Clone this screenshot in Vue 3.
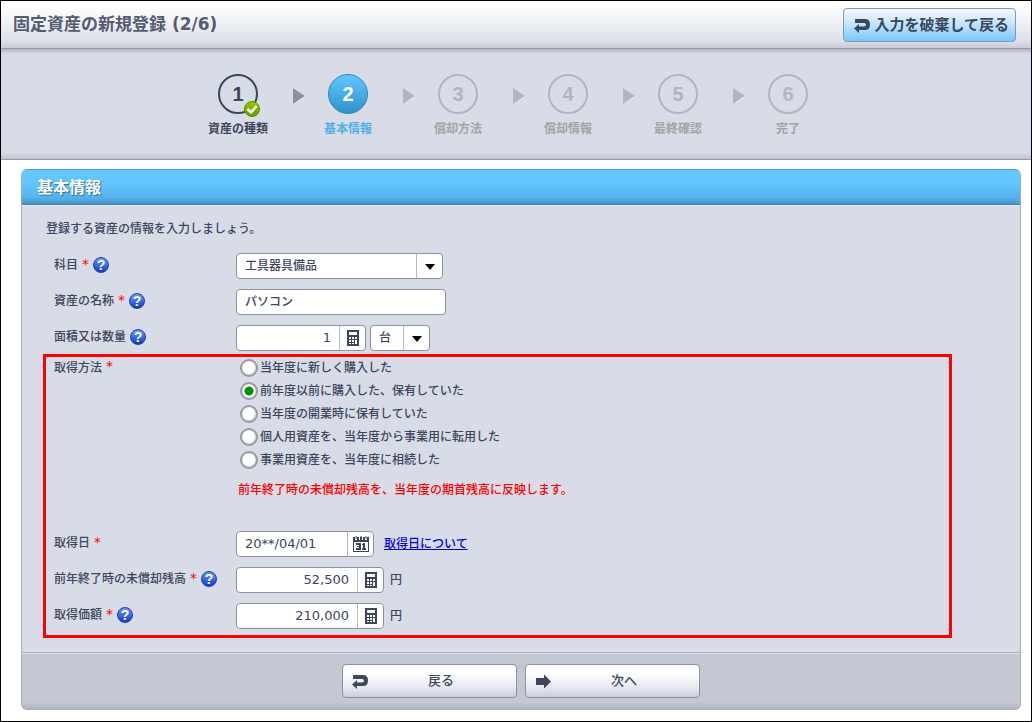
<script setup>
import { ref } from 'vue'

const steps = ['資産の種類', '基本情報', '償却方法', '償却情報', '最終確認', '完了']
const current = 2

const subject = ref('工具器具備品')
const assetName = ref('パソコン')
const quantity = ref('1')
const unit = ref('台')
const method = ref(1)
const acquiredOn = ref('20**/04/01')
const balance = ref('52,500')
const price = ref('210,000')

const methods = [
  '当年度に新しく購入した',
  '前年度以前に購入した、保有していた',
  '当年度の開業時に保有していた',
  '個人用資産を、当年度から事業用に転用した',
  '事業用資産を、当年度に相続した',
]

const stateOf = (n) => (n < current ? 'done' : n === current ? 'active' : 'todo')
</script>

<template>
  <div class="page">
    <header class="topbar">
      <h1>固定資産の新規登録 (2/6)</h1>
      <button type="button" class="discard">
        <svg width="17" height="15" viewBox="0 0 17 15" aria-hidden="true">
          <path d="M1 1H11Q16 1 16 6.500T11 12H5V15L0 10.500L5 6V8.500H10Q12 8.500 12 6.750T10 5H1Z" />
        </svg>
        <span>入力を破棄して戻る</span>
      </button>
    </header>

    <nav class="stepper" aria-label="登録手順">
      <ol>
        <template v-for="(name, i) in steps" :key="name">
          <li v-if="i > 0" class="arrow" :class="{ passed: i < current }" aria-hidden="true">
            <svg width="12" height="16" viewBox="0 0 12 16">
              <path class="glow" d="M0 1L12 9L0 16Z" />
              <path class="tri" d="M0 0L12 8L0 16Z" />
            </svg>
          </li>
          <li class="step" :class="stateOf(i + 1)">
            <span class="num">
              {{ i + 1 }}
              <svg v-if="i + 1 < current" class="check" width="16" height="16" viewBox="0 0 16 16" aria-hidden="true">
                <defs>
                  <linearGradient id="okfill" x1="0" y1="0" x2="0" y2="1">
                    <stop offset="0" stop-color="#9bd000" />
                    <stop offset="1" stop-color="#619800" />
                  </linearGradient>
                </defs>
                <circle cx="8" cy="8" r="7.500" fill="url(#okfill)" stroke="#5c9000" />
                <path d="M3.500 8L7 11.500L12.500 5" fill="none" stroke="#fff" stroke-width="2.500" />
              </svg>
            </span>
            <span class="name">{{ name }}</span>
          </li>
        </template>
      </ol>
    </nav>

    <form class="panel" @submit.prevent>
      <h2>基本情報</h2>
      <div class="body">
        <p class="intro">登録する資産の情報を入力しましょう。</p>

        <div class="rows outer">
          <div class="row">
            <div class="label">
              <label for="subject">科目</label><span class="req">*</span>
              <button type="button" class="help" aria-label="科目のヘルプ">?</button>
            </div>
            <div class="field">
              <span class="box subject">
                <select id="subject" v-model="subject"><option>工具器具備品</option></select>
                <svg class="drop" width="10" height="6" viewBox="0 0 10 6" aria-hidden="true"><path d="M0 0H10L5 6Z" /></svg>
              </span>
            </div>
          </div>

          <div class="row">
            <div class="label">
              <label for="asset">資産の名称</label><span class="req">*</span>
              <button type="button" class="help" aria-label="資産の名称のヘルプ">?</button>
            </div>
            <div class="field">
              <span class="box asset"><input id="asset" v-model="assetName" type="text" class="kana" /></span>
            </div>
          </div>

          <div class="row">
            <div class="label">
              <label for="qty">面積又は数量</label>
              <button type="button" class="help" aria-label="面積又は数量のヘルプ">?</button>
            </div>
            <div class="field">
              <span class="box qty">
                <input id="qty" v-model="quantity" type="text" class="numeric" />
                <button type="button" class="tool" aria-label="電卓">
                  <svg width="12" height="16" viewBox="0 0 12 16" aria-hidden="true">
                    <path d="M0 0H12V16H0Z" /><path class="hole" d="M2 2H10V5H2ZM2 7H4V9H2ZM5 7H7V9H5ZM8 7H10V9H8ZM2 10H4V12H2ZM5 10H7V12H5ZM8 10H10V14H8ZM2 13H4V14H2ZM5 13H7V14H5Z" />
                  </svg>
                </button>
              </span>
              <span class="box unit">
                <select v-model="unit" aria-label="単位"><option>台</option></select>
                <svg class="drop" width="10" height="6" viewBox="0 0 10 6" aria-hidden="true"><path d="M0 0H10L5 6Z" /></svg>
              </span>
            </div>
          </div>
        </div>

        <div class="marked">
          <div class="row method" role="radiogroup" aria-labelledby="method-label">
            <div class="label"><span id="method-label">取得方法</span><span class="req">*</span></div>
            <div>
              <label v-for="(m, i) in methods" :key="m" class="choice">
                <input v-model="method" type="radio" name="method" :value="i" />
                <span>{{ m }}</span>
              </label>
              <p class="note">前年終了時の未償却残高を、当年度の期首残高に反映します。</p>
            </div>
          </div>

          <div class="rows">
            <div class="row">
              <div class="label"><label for="date">取得日</label><span class="req">*</span></div>
              <div class="field">
                <span class="box date">
                  <input id="date" v-model="acquiredOn" type="text" />
                  <button type="button" class="tool" aria-label="カレンダー">
                    <svg width="16" height="16" viewBox="0 0 16 16" aria-hidden="true">
                      <path d="M0 1H2V4H4V1H6V4H7V1H9V4H10V1H12V4H14V1H16V16H0Z" />
                      <path class="hole" d="M1 6H15V15H1Z" />
                      <path d="M2.500 0H3.500V3H2.500ZM7.500 0H8.500V3H7.500ZM12.500 0H13.500V3H12.500Z" />
                      <path d="M3 7H8V14H3V12H6V11H4V10H6V9H3ZM10 7H12V12H13V14H9V12H10V9H9V8H10Z" />
                    </svg>
                  </button>
                </span>
                <a href="#about-date" class="about">取得日について</a>
              </div>
            </div>

            <div class="row">
              <div class="label">
                <label for="balance">前年終了時の未償却残高</label><span class="req">*</span>
                <button type="button" class="help" aria-label="未償却残高のヘルプ">?</button>
              </div>
              <div class="field">
                <span class="box money">
                  <input id="balance" v-model="balance" type="text" class="numeric" />
                  <button type="button" class="tool" aria-label="電卓">
                    <svg width="12" height="16" viewBox="0 0 12 16" aria-hidden="true">
                      <path d="M0 0H12V16H0Z" /><path class="hole" d="M2 2H10V5H2ZM2 7H4V9H2ZM5 7H7V9H5ZM8 7H10V9H8ZM2 10H4V12H2ZM5 10H7V12H5ZM8 10H10V14H8ZM2 13H4V14H2ZM5 13H7V14H5Z" />
                    </svg>
                  </button>
                </span>
                <span class="yen">円</span>
              </div>
            </div>

            <div class="row">
              <div class="label">
                <label for="price">取得価額</label><span class="req">*</span>
                <button type="button" class="help" aria-label="取得価額のヘルプ">?</button>
              </div>
              <div class="field">
                <span class="box money">
                  <input id="price" v-model="price" type="text" class="numeric" />
                  <button type="button" class="tool" aria-label="電卓">
                    <svg width="12" height="16" viewBox="0 0 12 16" aria-hidden="true">
                      <path d="M0 0H12V16H0Z" /><path class="hole" d="M2 2H10V5H2ZM2 7H4V9H2ZM5 7H7V9H5ZM8 7H10V9H8ZM2 10H4V12H2ZM5 10H7V12H5ZM8 10H10V14H8ZM2 13H4V14H2ZM5 13H7V14H5Z" />
                    </svg>
                  </button>
                </span>
                <span class="yen">円</span>
              </div>
            </div>
          </div>
        </div>
      </div>

      <footer class="actions">
        <button type="button">
          <svg width="17" height="15" viewBox="0 0 17 15" aria-hidden="true">
            <path d="M1 1H11Q16 1 16 6.500T11 12H5V15L0 10.500L5 6V8.500H10Q12 8.500 12 6.750T10 5H1Z" />
          </svg>
          <span>戻る</span>
        </button>
        <button type="submit">
          <svg width="17" height="15" viewBox="0 0 17 15" aria-hidden="true">
            <path d="M1 4H9V0.500L16 7.500L9 14.500V11H1Z" />
          </svg>
          <span>次へ</span>
        </button>
      </footer>
    </form>
  </div>
</template>

<style>
body {
  background: #fff;
}
</style>

<style scoped>
.page,
.page * {
  box-sizing: border-box;
}
.page {
  min-height: 100vh;
  border: 1px solid #000;
  color: #3d465c;
  font: 500 12px/16px "DejaVu Sans", "Noto Sans CJK JP", sans-serif;
}
h1, h2, p, ol {
  margin: 0;
  padding: 0;
}
button, input, select {
  margin: 0;
  padding: 0;
  border: 0;
  background: none;
  color: inherit;
  font: inherit;
}
svg {
  display: block;
  flex: none;
  fill: #3d465c;
}

.topbar {
  display: flex;
  align-items: center;
  justify-content: space-between;
  padding: 7px 15px 6px 12px;
  border-bottom: 1px solid #9799a3;
  background: linear-gradient(#fff 10%, #f0f2f7 45%, #dde0ea 85%, #c9ccd8);
}
h1 {
  padding-bottom: 2px;
  color: #555b70;
  font-size: 17px;
  line-height: 24px;
}
.discard {
  display: flex;
  align-items: center;
  justify-content: center;
  gap: 3px;
  height: 34px;
  padding: 0 6px 0 10px;
  border: 1px solid #8d93a8;
  border-radius: 4px;
  background: linear-gradient(#f4faff, #c0e3fd 50%, #76c8ff);
  font-size: 15px;
  font-weight: 700;
}

.stepper {
  padding: 25px 6px 22px 0;
  border-bottom: 1px solid #9799a3;
  background: linear-gradient(#b2b5c1, #d8dce7 5px, #d8dce7 calc(100% - 7px), #c4c7d1);
}
.stepper ol {
  display: flex;
  justify-content: center;
  list-style: none;
}
.step {
  display: flex;
  flex-direction: column;
  align-items: center;
  gap: 7px;
  width: 60px;
  font-weight: 700;
  white-space: nowrap;
}
.num {
  position: relative;
  display: flex;
  align-items: center;
  justify-content: center;
  width: 40px;
  height: 40px;
  border: 2px solid currentColor;
  border-radius: 50%;
  font: 700 20px/20px "Liberation Sans", sans-serif;
}
.todo {
  color: #b0b5c2;
}
.todo .name {
  color: #a3a3a3;
}
.active .num {
  border: 1px solid #2a86bb;
  background: linear-gradient(#62c6ff, #2f93cb);
  color: #fff;
}
.active .name {
  color: #4fb0e8;
}
.check {
  position: absolute;
  right: -4px;
  bottom: -5px;
}
.arrow {
  margin: 14px 13px 0 25px;
}
.arrow .glow {
  fill: #fff;
}
.arrow .tri {
  fill: #b0b5c2;
}
.arrow.passed .tri {
  fill: #8b91a2;
}

.panel {
  margin: 9px 10px 11px 20px;
  border: 1px solid #a9adb9;
  border-top: 0;
  border-radius: 6px;
  background: #d8dce7;
  overflow: hidden;
}
h2 {
  padding: 8px 15px 7px;
  border-top: 1px solid #4f9dca;
  border-bottom: 1px solid #3f80ad;
  background: linear-gradient(#64c6ff 40%, #56b2ec 80%, #4796cb);
  color: #fff;
  font-size: 16px;
  line-height: 19px;
  text-shadow: 1px 1px 1px #2b6c99;
}
.body {
  padding: 15px 68px 14px 21px;
  border-top: 1px solid #e9ecf4;
}
.intro {
  margin: 0 0 16px 3px;
}
.rows {
  display: flex;
  flex-direction: column;
  gap: 10px;
}
.outer {
  padding-left: 11px;
}
.marked {
  margin-top: 3px;
  padding: 0 0 6px 8px;
  border: 3px solid #f00;
}
.row {
  display: grid;
  grid-template-columns: 182px 1fr;
  align-items: center;
}
.label {
  display: flex;
  align-items: center;
  gap: 4px;
  padding-bottom: 2px;
  white-space: nowrap;
}
.req {
  padding-bottom: 3px;
  color: #f00;
  font-size: 14px;
}
.help {
  display: flex;
  align-items: center;
  justify-content: center;
  width: 16px;
  height: 16px;
  border: 1px solid #1740a8;
  border-radius: 50%;
  background: linear-gradient(#6f9cf2, #1238d0);
  color: #fff;
  font: 700 14px/14px "Liberation Sans", sans-serif;
}
.field {
  display: flex;
  align-items: center;
  gap: 4px;
}
.box {
  position: relative;
  display: flex;
  height: 26px;
  border: 1px solid #8d91a0;
  border-radius: 4px;
  background: #fff;
  overflow: hidden;
}
.box input,
.box select {
  flex: 1;
  width: 100%;
  min-width: 0;
  padding: 0 8px;
  appearance: none;
  outline: 0;
}
.box input {
  font-size: 13px;
}
.box .kana {
  font-size: 12px;
}
.box .numeric {
  text-align: right;
}
.box:has(select)::after {
  content: "";
  position: absolute;
  top: 0;
  right: 25px;
  bottom: 0;
  border-left: 1px solid #b9bcc6;
}
.drop {
  position: absolute;
  top: 10px;
  right: 7px;
  fill: #000;
  pointer-events: none;
}
.subject { width: 207px; }
.asset { width: 210px; }
.qty { width: 130px; }
.unit { width: 60px; }
.date { width: 138px; }
.money { width: 148px; }
.tool {
  display: flex;
  align-items: center;
  justify-content: center;
  flex: none;
  width: 26px;
  border-left: 1px solid #b9bcc6;
}
.hole {
  fill: #fff;
}
.about {
  margin-left: 6px;
  color: #00e;
}
.yen {
  margin-left: 2px;
}

.method {
  align-items: start;
}
.method .label,
.choice {
  height: 23px;
  padding-bottom: 2px;
}
.choice {
  display: flex;
  align-items: center;
  gap: 2px;
  padding-left: 4px;
}
.choice input {
  appearance: none;
  width: 18px;
  height: 18px;
  border: 2px solid #989ba4;
  border-radius: 50%;
  background: radial-gradient(circle at 45% 45%, #fff 50%, #d5d6da 75%);
}
.choice input:checked {
  background: radial-gradient(circle, #009200 4px, #fff 5px, #e2e2e5 8px);
}
.note {
  margin: 10px 0 33px 2px;
  color: #f00;
}

.actions {
  display: flex;
  justify-content: center;
  gap: 8px;
  padding: 11px;
  border-top: 1px solid #a9adb9;
  background: linear-gradient(#e0e3ec 1px, #c4c8d3 1px, #c4c8d3 calc(100% - 7px), #afb3c0);
}
.actions button {
  display: flex;
  align-items: center;
  width: 175px;
  height: 34px;
  padding: 0 3px 0 9px;
  border: 1px solid #8d91a0;
  border-radius: 4px;
  background: linear-gradient(#fff 25%, #e3e6ee 75%, #c9cdd8);
  font-size: 13px;
}
.actions span {
  flex: 1;
}
</style>
